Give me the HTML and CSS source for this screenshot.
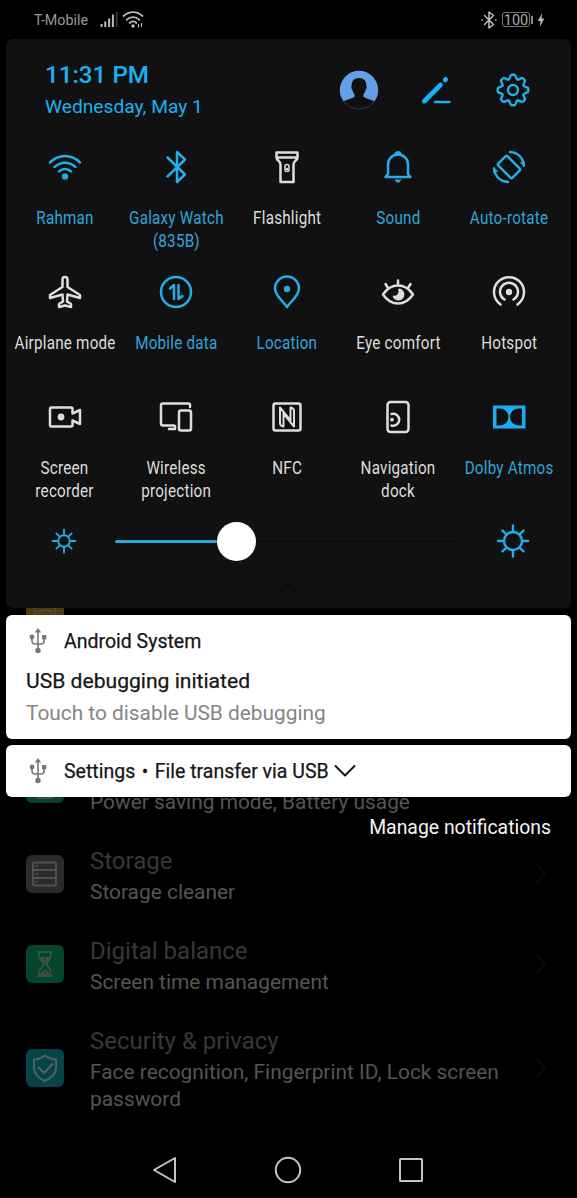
FILE: index.html
```
<!DOCTYPE html>
<html lang="en">
<head>
<meta charset="utf-8">
<title>Quick settings</title>
<link rel="stylesheet" href="styles.css">
</head>
<body>
<div class="phone">
  <main class="settings">
    <div class="row"><div class="app-icon yellow"><svg width="38" height="38" viewBox="0 0 38 38"><path d="M9 30V22M29 30V22M12 28c3-4 11-4 14 0"/></svg></div></div>
    <div class="row"></div>
    <div class="row">
      <div class="app-icon green"><svg width="38" height="38" viewBox="0 0 38 38"><rect x="11" y="9" width="16" height="24" rx="2"/></svg></div>
      <div class="row-text"><div class="row-title"></div><div class="row-sub">Power saving mode, Battery usage</div></div>
    </div>
    <div class="row">
      <div class="app-icon gray"><svg width="38" height="38" viewBox="0 0 38 38"><rect x="7" y="7.500" width="23" height="23" rx="1"/><path d="M7 15h23M7 23h23M10 11.300h1M10 19h1M10 26.800h1"/></svg></div>
      <div class="row-text"><div class="row-title">Storage</div><div class="row-sub">Storage cleaner</div></div>
      <svg class="chev" width="12" height="22" viewBox="0 0 12 22"><path d="M2 2l8 9-8 9"/></svg>
    </div>
    <div class="row">
      <div class="app-icon green"><svg width="38" height="38" viewBox="0 0 38 38"><path d="M12 7h14M12 31h14M13 7c0 7 2 8 5 12-3 4-5 5-5 12M25 7c0 7-2 8-5 12 3 4 5 5 5 12M15.500 13h7L19 17zM15 29l4-3.500 4 3.500z"/></svg></div>
      <div class="row-text"><div class="row-title">Digital balance</div><div class="row-sub">Screen time management</div></div>
      <svg class="chev" width="12" height="22" viewBox="0 0 12 22"><path d="M2 2l8 9-8 9"/></svg>
    </div>
    <div class="row tall">
      <div class="app-icon teal"><svg width="38" height="38" viewBox="0 0 38 38"><path class="thick" d="M19 6.500c4 3 7 4 11 4v8c0 6-4 10.500-11 13.500-7-3-11-7.500-11-13.500v-8c4 0 7-1 11-4zM12.500 18.500l5.500 5.500 8.500-9"/></svg></div>
      <div class="row-text"><div class="row-title">Security &amp; privacy</div><div class="row-sub">Face recognition, Fingerprint ID, Lock screen<br>password</div></div>
      <svg class="chev" width="12" height="22" viewBox="0 0 12 22"><path d="M2 2l8 9-8 9"/></svg>
    </div>
  </main>
  <nav class="navbar">
    <svg width="30" height="30" viewBox="0 0 30 30"><path d="M4 15L25 3v24z"/></svg>
    <svg width="30" height="30" viewBox="0 0 30 30"><circle cx="15" cy="15" r="12.200"/></svg>
    <svg width="30" height="30" viewBox="0 0 30 30"><rect x="4" y="4" width="22" height="22" rx=".5"/></svg>
  </nav>

  <div class="shade">
    <header class="status">
      <span class="carrier">T-Mobile</span>
      <svg class="signal" width="18" height="18" viewBox="0 0 18 18"><path d="M1.500 16v-3M5.300 16v-5.500M9.100 16V7.500M12.900 16V3.500"/><path class="dim" d="M16.700 16V1"/></svg>
      <svg class="status-wifi" width="22" height="18" viewBox="0 0 22 18"><path d="M1.500 5c5.500-5.300 13.500-5.300 19 0M4.700 8.800c3.700-3.500 9-3.500 12.600 0M7.600 12c2-1.900 4.800-1.900 6.800 0"/><circle cx="11" cy="15" r="1.700"/><path class="tiny" d="M16.500 13.500v2.500M19.500 12.500v3"/></svg>
      <span class="spacer"></span>
      <svg class="status-bt" width="16" height="18" viewBox="0 0 16 18"><path d="M3.500 4.500l9 9L8 17V1l4.500 3.500-9 9M1 9h.5M14.500 9h.5"/></svg>
      <span class="battery">100</span><span class="cap"></span>
      <svg class="bolt" width="8" height="14" viewBox="0 0 8 14"><path d="M5 0L.8 8H3.500L2.800 14 7.300 5.500H4.500z"/></svg>
    </header>

    <section class="panel">
      <div class="head">
        <div><div class="time">11:31 PM</div><div class="date">Wednesday, May 1</div></div>
        <div class="tools">
          <svg width="40" height="40" viewBox="0 0 40 40"><circle cx="20" cy="20" r="19.200" fill="#64a0e8"/><path fill="#101010" d="M20 8c5 0 7.500 3 7.300 8 .7.400.500 3-.6 3.700-.5 2.300-1.400 3.600-2.200 4.300v2.700c2.500 2 7 2.500 10.800 4.600a18.900 18.900 0 0 1-30.600 0c3.800-2.100 8.300-2.600 10.800-4.600V24c-.8-.7-1.700-2-2.200-4.300-1.100-.7-1.300-3.300-.6-3.700C12.500 11 15 8 20 8z"/></svg>
          <svg class="pencil" width="32" height="32" viewBox="0 0 32 32"><path d="M4.500 27L20.500 11" stroke-width="4.600"/><path d="M25.300 5.800l.3-.3" stroke-width="5"/><path d="M2.300 29.500l.6-4 3.500 3z" stroke="none" fill="#18b1f5"/><path d="M15 28h14.500" stroke-width="2.400"/></svg>
          <svg class="gear" width="34" height="34" viewBox="-17 -17 34 34"><defs><path id="tooth" d="M-4.400-10.600C-3.200-11.100-3-12-2.700-13.600Q-2.400-15.300-1-15.300H1Q2.400-15.300 2.700-13.600C3-12 3.200-11.100 4.400-10.600"/></defs><g class="line blue"><use href="#tooth"/><use href="#tooth" transform="rotate(45)"/><use href="#tooth" transform="rotate(90)"/><use href="#tooth" transform="rotate(135)"/><use href="#tooth" transform="rotate(180)"/><use href="#tooth" transform="rotate(225)"/><use href="#tooth" transform="rotate(270)"/><use href="#tooth" transform="rotate(315)"/><circle r="5"/></g></svg>
        </div>
      </div>

      <div class="tiles">
        <div class="tile on"><svg viewBox="-17 -17 34 34"><path d="M-15-4.500c8.500-8.600 21.500-8.600 30 0M-10.500 0c6-5.800 15-5.800 21 0M-6 4.500c3.500-3.200 8.500-3.200 12 0"/><circle class="solid" cy="9.500" r="3.200"/></svg><span>Rahman</span></div>
        <div class="tile on"><svg viewBox="-17 -17 34 34"><path d="M-8.500-9.500L9 7.500 1 15V-15l8 7.500L-8.500 9.500"/></svg><span>Galaxy Watch<br>(835B)</span></div>
        <div class="tile"><svg viewBox="-17 -17 34 34"><path d="M-10.500-14.500h21v5c0 3-4 3.500-4 7V15H-6.500V-2.500c0-3.500-4-4-4-7zM-10-9.500h20"/><rect class="thin" x="-2" y="-2.500" width="4" height="7" rx="2"/><circle class="solid" cy="2" r="1.300"/></svg><span>Flashlight</span></div>
        <div class="tile on"><svg viewBox="-17 -17 34 34"><path d="M-10 7V-2.500a10 10 0 0 1 20 0V7l2.500 3H-12.500zM-2.500-12.800a2.600 2.600 0 0 1 5 0"/><path class="solid" d="M-3.500 12.500h7L1.500 15.500h-3z"/></svg><span>Sound</span></div>
        <div class="tile on"><svg viewBox="-17 -17 34 34"><rect x="-6.500" y="-10" width="13" height="20" rx="1.500" transform="rotate(-45)"/><path d="M1-15C9-14.500 14-9 15-1.500M-1 15C-9 14.500-14 9-15 1.500"/><path class="solid" d="M10.500-4.500l5.500-1v5.500zM-10.500 4.500l-5.500 1V0z"/></svg><span>Auto-rotate</span></div>

        <div class="tile"><svg viewBox="-17 -17 34 34"><path d="M-2.500-5V-12.500a2.500 2.500 0 0 1 5 0V-5L15 3v3L2.500 2.500 2 9.500l4 2.500v3L0 13.500-6 15v-3l4-2.500-.5-7L-15 6V3z"/></svg><span>Airplane mode</span></div>
        <div class="tile on"><svg viewBox="-17 -17 34 34"><circle r="15"/><path d="M-6-3.500l4-3.500V7M2.500-7V7l4-3"/></svg><span>Mobile data</span></div>
        <div class="tile on"><svg viewBox="-17 -17 34 34"><path d="M0 15C-3 10-12 4-12-3.500a12 12 0 0 1 24 0C12 4 3 10 0 15z"/><circle class="solid" cy="-3" r="3.200"/></svg><span>Location</span></div>
        <div class="tile"><svg viewBox="-17 -17 34 34"><path d="M-15 2.500C-7-9.500 7-9.500 15 2.500 7 14.500-7 14.500-15 2.500zM0-7v-4.500M-10-4l-2.500-4M10-4l2.500-4"/><path class="solid" d="M1.500-3.500a6 6 0 1 1-7 7c3.500 1.500 7.500-2 5.500-6.500z"/></svg><span>Eye comfort</span></div>
        <div class="tile"><svg viewBox="-17 -17 34 34"><path d="M-8.500 12.500a15 15 0 1 1 17 0M-4.500 7.500a9 9 0 1 1 9 0"/><circle class="solid" r="3.200"/></svg><span>Hotspot</span></div>

        <div class="tile"><svg viewBox="-17 -17 34 34"><path d="M-15-8Q-15-9.500-13.500-9.500H6Q7.500-9.500 7.500-8V-3.500L15-7V7L7.500 3.500V8Q7.500 9.500 6 9.500H-13.500Q-15 9.500-15 8z"/><circle class="solid" cx="-4" r="3.400"/></svg><span>Screen<br>recorder</span></div>
        <div class="tile"><svg viewBox="-17 -17 34 34"><path d="M14-10v-2Q14-13.500 12.500-13.500H-13Q-15-13.500-15-11.500V6.500Q-15 8.500-13 8.500H-2M-7 12H-1V9"/><rect x="3" y="-6.500" width="12" height="20" rx="2"/></svg><span>Wireless<br>projection</span></div>
        <div class="tile"><svg viewBox="-17 -17 34 34"><rect x="-13.500" y="-13.500" width="27" height="27" rx="2"/><path class="nfc" d="M-3.500 9.500Q-7 9-7 6V-9.500L3.500 3.500V-9.500Q7-9 7-6V9.500L-3.500-3.500z"/></svg><span>NFC</span></div>
        <div class="tile"><svg viewBox="-17 -17 34 34"><rect x="-10.500" y="-15" width="21" height="30" rx="3"/><path d="M-6.500-3a6 6 0 1 1 0 11.500"/><circle class="solid" cx="-6" cy="2.700" r="1.900"/></svg><span>Navigation<br>dock</span></div>
        <div class="tile on"><svg viewBox="-17 -17 34 34"><path class="dolby" fill-rule="evenodd" d="M-16-11.500H16.500V11.500H-16zM-12.500-8.500V8.500h3.500a8.500 8.500 0 0 0 0-17zM13-8.500V8.500H9.500a8.500 8.500 0 0 1 0-17z"/></svg><span>Dolby Atmos</span></div>
      </div>

      <div class="brightness">
        <svg class="line blue" width="26" height="26" viewBox="-17 -17 34 34"><circle r="7.500"/><path d="M0-8v-7M0 8v7M-8 0h-7M8 0h7M-6-6l-4-4M6-6l4-4M-6 6l-4 4M6 6l4 4"/></svg>
        <div class="slider"><div class="fill"></div><div class="thumb"></div><div class="rest"></div></div>
        <svg class="line blue" width="34" height="34" viewBox="-17 -17 34 34"><circle r="9"/><path d="M0-10v-5.500M0 10v5.500M-10 0h-5M10 0h5M-7-7l-3.500-3.500M7-7l3.500-3.500M-7 7l-3.500 3.500M7 7l3.500 3.500"/></svg>
      </div>
      <svg class="handle" width="24" height="12" viewBox="0 0 24 12"><path d="M1 10L12 2l11 8"/></svg>
    </section>

    <article class="card first">
      <div class="card-head"><svg class="usb" width="18" height="26" viewBox="0 0 18 26"><path d="M9 4v18M3 9v4q0 3 3 3h6q3 0 3-3V9"/><path class="solid" d="M9 0l3.200 4.500H5.800z"/><circle class="solid" cx="3" cy="9" r="2.400"/><path class="solid" d="M13 7h4.300v4.300h-4.300z"/><circle class="solid" cx="9" cy="22.500" r="2.700"/></svg><span>Android System</span></div>
      <div class="card-title">USB debugging initiated</div>
      <div class="card-sub">Touch to disable USB debugging</div>
    </article>
    <article class="card second">
      <div class="card-head"><svg class="usb" width="18" height="26" viewBox="0 0 18 26"><path d="M9 4v18M3 9v4q0 3 3 3h6q3 0 3-3V9"/><path class="solid" d="M9 0l3.200 4.500H5.800z"/><circle class="solid" cx="3" cy="9" r="2.400"/><path class="solid" d="M13 7h4.300v4.300h-4.300z"/><circle class="solid" cx="9" cy="22.500" r="2.700"/></svg><span>Settings<b class="dot">•</b>File transfer via USB</span><svg class="down" width="22" height="14" viewBox="0 0 22 14"><path d="M1.500 2L11 11.500 20.500 2"/></svg></div>
    </article>
    <div class="manage">Manage notifications</div>
  </div>
</div>
</body>
</html>
```
FILE: styles.css
```
* { box-sizing: border-box; }
body { margin: 0; background: #000; font-family: Roboto, "Liberation Sans", sans-serif; }
svg { display: block; flex: none; fill: none; stroke-linecap: round; stroke-linejoin: round; }
.phone { position: relative; width: 577px; height: 1198px; overflow: hidden; background: #000; white-space: nowrap; }

.settings { height: 1141px; padding: 559px 30px 0 26px; }
.row { display: flex; align-items: center; height: 90px; }
.row.tall { height: 117px; }
.app-icon { width: 38px; height: 38px; border-radius: 6px; overflow: hidden; flex: none; }
.app-icon svg { stroke: #4c5350; stroke-width: 1.3; }
.app-icon .thick { stroke-width: 2; stroke: #4c6264; }
.yellow { background: #4d3b0b; }
.green { background: #05452a; }
.gray { background: #2b2b2b; }
.gray svg { stroke: #515151; stroke-width: 1.8; }
.teal { background: #084345; }
.row-text { flex: 1; margin-left: 26px; padding-top: 4px; }
.row-title { height: 33px; font-size: 24px; line-height: 31px; color: #383838; }
.row-sub { font-size: 20.9px; line-height: 27px; color: #555; }
.tall .row-text { padding-top: 3px; }
.chev { stroke: #060a14; stroke-width: 2; }

.navbar { display: flex; justify-content: space-between; height: 57px; padding: 14px 151px 0 150px; }
.navbar svg { stroke: #c4c4c4; stroke-width: 2; }

.shade { position: absolute; inset: 0 0 auto 0; }
.status { display: flex; align-items: center; height: 39px; padding: 0 32px 0 34px; color: #999; }
.carrier { font-size: 14.3px; width: 66px; padding-top: 1px; }
.signal, .status-wifi, .status-bt { stroke: #bbb; stroke-width: 1.8; }
.signal { stroke-linecap: butt; stroke-width: 2; }
.dim { stroke: #333; }
.status-wifi { margin-left: 4px; }
.status-wifi circle { fill: #bbb; stroke: none; }
.tiny { stroke-width: 1.2; }
.spacer { flex: 1; }
.status-bt { stroke-width: 1.5; margin-right: 5px; }
.battery { width: 28px; height: 15px; border: 1px solid #777; border-radius: 3px; font-size: 14.5px; line-height: 15px; text-align: center; color: #aaa; }
.cap { width: 2px; height: 8px; margin: 0 4px 0 1px; background: #888; }
.bolt { fill: #bbb; }

.panel { height: 569px; margin: 0 6px; padding: 0 6.5px 0 3.5px; border-radius: 7px; background: #111; }
.head { display: flex; justify-content: space-between; height: 111px; padding: 21px 35px 0 35.5px; color: #18b1f5; }
.time { font-size: 24.2px; line-height: 31px; font-weight: 500; }
.date { font-size: 19.2px; line-height: 32px; }
.tools { display: flex; align-items: center; height: 60px; gap: 41px; }
.gear { margin-left: 3px; }
.pencil { stroke: #18b1f5; }
.line { stroke-width: 2.4; }
.blue { stroke: #22aee9; }
.tiles { display: grid; grid-template-columns: repeat(5, 111px); grid-auto-rows: 125px; }
.tile { display: flex; flex-direction: column; align-items: center; color: #dedede; stroke: #dedede; }
.tile.on { color: #2ea6dc; stroke: #22aee9; }
.tile svg { width: 34px; height: 34px; stroke: inherit; stroke-width: 2.5; }
.tile .solid { fill: currentColor; stroke: none; }
.tile .dolby { fill: #16aff6; stroke: none; }
.tile .thin { stroke-width: 1.5; }
.tile .nfc { stroke-width: 2; }
.tile span { margin-top: 23px; font-size: 17.5px; line-height: 23px; text-align: center; letter-spacing: .25px; transform: scaleX(.87); }
.brightness { display: flex; align-items: center; height: 40px; margin-top: -4px; padding: 0 35px 0 41.5px; }
.slider { flex: 1; display: flex; align-items: center; margin: 0 36px 0 38px; }
.fill { width: 102px; height: 3px; background: #2aa6df; border-radius: 2px; }
.thumb { width: 39px; height: 39px; border-radius: 50%; background: #fff; }
.rest { flex: 1; height: 2px; background: #0d0d0d; }
.handle { margin: 22px auto 0; stroke: #0a0a0a; stroke-width: 1.5; }

.card { margin: 7px 6px 0; background: #fff; border-radius: 6px; padding: 11px 20px 0; color: #161616; }
.card.first { height: 124px; }
.card.second { height: 52px; margin-top: 6px; padding-top: 11px; }
.card-head { display: flex; align-items: center; height: 30px; font-size: 19.5px; padding-left: 3px; }
.card-head > span { margin-left: 17px; padding-top: 1px; -webkit-text-stroke: .25px; }
.dot { margin: 0 6.5px; font-weight: 400; }
.usb { stroke: #777; stroke-width: 1.6; }
.usb .solid { fill: #777; stroke: none; }
.down { margin-left: 5px; stroke: #161616; stroke-width: 2; }
.card-title { margin-top: 8px; font-size: 21.1px; line-height: 34px; -webkit-text-stroke: .25px; }
.card-sub { font-size: 20.85px; line-height: 30px; color: #858585; }
.manage { margin: 18px 26px 0; text-align: right; font-size: 19.4px; line-height: 26px; color: #f4f4f4; }
```
